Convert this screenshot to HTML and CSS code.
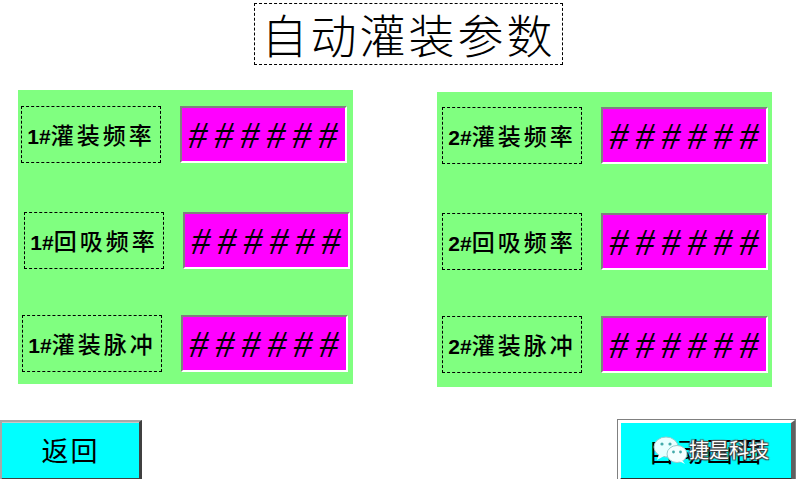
FILE: index.html
```html
<!DOCTYPE html>
<html lang="zh-CN">
<head>
<meta charset="utf-8">
<title>自动灌装参数</title>
<link rel="stylesheet" href="styles.css">
</head>
<body>
<div class="screen">
  <div class="title">自动灌装参数</div>
  <div class="panels">
    <div class="panel panel-left">
      <div class="row row1">
        <div class="label"><b>1#</b>灌装频率</div>
        <div class="value">######</div>
      </div>
      <div class="row row2 shift">
        <div class="label"><b>1#</b>回吸频率</div>
        <div class="value">######</div>
      </div>
      <div class="row row3">
        <div class="label"><b>1#</b>灌装脉冲</div>
        <div class="value">######</div>
      </div>
    </div>
    <div class="panel panel-right">
      <div class="row row1">
        <div class="label"><b>2#</b>灌装频率</div>
        <div class="value">######</div>
      </div>
      <div class="row row2">
        <div class="label"><b>2#</b>回吸频率</div>
        <div class="value">######</div>
      </div>
      <div class="row row3">
        <div class="label"><b>2#</b>灌装脉冲</div>
        <div class="value">######</div>
      </div>
    </div>
  </div>
  <div class="buttons">
    <div class="btn btn-back">返回</div>
    <div class="btn btn-auto">自动画面
      <div class="watermark">
        <svg class="wx" width="36" height="30" viewBox="0 0 36 30">
          <ellipse cx="13" cy="12" rx="12" ry="10" fill="#e8ffff" stroke="#9cc" stroke-width="1"/>
          <path d="M6 19 L4 25 L11 21 Z" fill="#e8ffff"/>
          <circle cx="9" cy="9" r="1.6" fill="#4aa"/>
          <circle cx="17" cy="9" r="1.6" fill="#4aa"/>
          <ellipse cx="24" cy="19" rx="10" ry="8.5" fill="#f4ffff" stroke="#9cc" stroke-width="1"/>
          <path d="M29 25 L32 29 L26 26 Z" fill="#f4ffff"/>
          <circle cx="20.5" cy="17" r="1.4" fill="#4aa"/>
          <circle cx="27.5" cy="17" r="1.4" fill="#4aa"/>
        </svg>
        <span class="wm-text">捷是科技</span>
      </div>
    </div>
  </div>
</div>
</body>
</html>
```
FILE: styles.css
```css
html, body {
  margin: 0;
  padding: 0;
  background: #ffffff;
}
.screen {
  width: 798px;
  height: 479px;
  overflow: hidden;
  position: relative;
  font-family: "Noto Sans CJK SC", "Liberation Sans", sans-serif;
  color: #000;
}
.title {
  box-sizing: border-box;
  margin: 3px 0 0 254px;
  width: 309px;
  height: 62px;
  border: 1px dashed #000;
  font-size: 46px;
  line-height: 58px;
  letter-spacing: 3px;
  text-align: center;
  font-weight: 300;
}
.panels {
  display: flex;
  align-items: flex-start;
  margin-top: 25px;
  height: 298px;
}
.panel {
  box-sizing: border-box;
  width: 335px;
  height: 294px;
  background: #80ff80;
  display: flex;
  flex-direction: column;
}
.panel-left {
  margin-left: 18px;
  padding: 16px 0 0 3px;
}
.panel-right {
  margin-left: 84px;
  margin-top: 2px;
  height: 295px;
  padding: 15px 0 0 5px;
}
.row {
  display: flex;
  align-items: flex-start;
  height: 57px;
}
.row2 { margin-top: 49px; }
.row3 { margin-top: 46px; }
.panel-left .row2 { padding-left: 3px; }
.panel-left .row3 { padding-left: 1px; }
.label {
  box-sizing: border-box;
  width: 140px;
  height: 57px;
  border: 1px dashed #000;
  font-size: 23px;
  line-height: 54px;
  letter-spacing: 3px;
  text-align: center;
  white-space: nowrap;
  font-weight: 500;
}
.label b {
  font-family: "Liberation Sans", sans-serif;
  font-weight: 700;
  letter-spacing: 0;
  font-size: 21px;
}
.value {
  box-sizing: border-box;
  margin-left: 19px;
  width: 167px;
  height: 57px;
  background: #ff00ff;
  border-style: solid;
  border-width: 2px;
  border-color: #808080 #ffffff #ffffff #808080;
  font-family: "Liberation Serif", serif;
  font-size: 38px;
  line-height: 54px;
  letter-spacing: 7px;
  padding-left: 6px;
  text-align: center;
  font-style: italic;
  white-space: nowrap;
}
.buttons {
  display: flex;
  justify-content: space-between;
  margin-top: 32px;
}
.btn {
  box-sizing: border-box;
  height: 62px;
  background: #00ffff;
  font-size: 27px;
  line-height: 56px;
  text-align: center;
  letter-spacing: 2px;
  position: relative;
}
.btn-back {
  width: 142px;
  border-style: solid;
  border-width: 2px 3px 4px 2px;
  border-color: #a8a8a8 #404040 #404040 #a8a8a8;
  box-shadow: inset 0 1px 0 #c8c8c8;
}
.btn-auto {
  width: 177px;
  margin-right: 3px;
  border-style: solid;
  border-width: 3px 4px 4px 3px;
  border-color: #ffffff #606060 #303030 #ffffff;
  box-shadow: 0 0 0 1px #808080;
}
.watermark {
  position: absolute;
  left: 32px;
  top: 12px;
  display: flex;
  align-items: center;
  gap: 0;
}
.wm-text {
  color: #ffffff;
  font-size: 20px;
  letter-spacing: 0;
  line-height: 24px;
  text-shadow: 1px 1px 1px #333, -1px -1px 1px #555, 1px -1px 1px #555, -1px 1px 1px #555;
}
```
